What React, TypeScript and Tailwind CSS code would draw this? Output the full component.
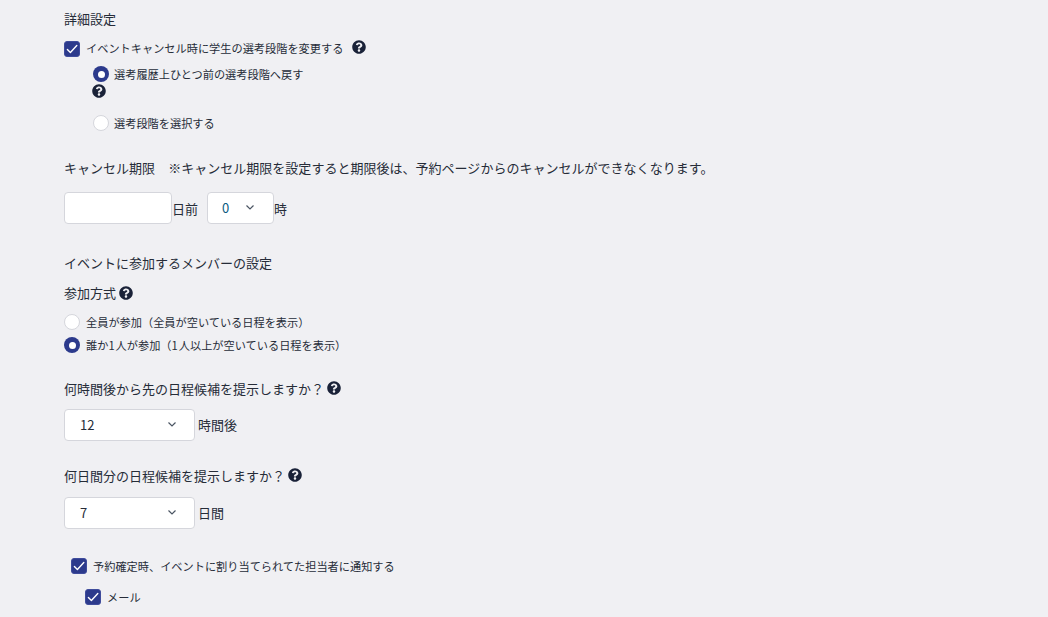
import React from "react";
import { FaQuestionCircle } from "react-icons/fa";

const Help = ({ className = "" }: { className?: string }) => (
  <FaQuestionCircle className={`text-[#1a2238] shrink-0 ${className}`} size={14} />
);

const Check = () => (
  <span className="w-4 h-4 rounded-[3px] bg-[#2c3a8c] border border-[#3f4c9c] flex items-center justify-center shrink-0">
    <svg width="12" height="12" viewBox="0 0 12 12" fill="none">
      <path d="M1.4 6.4 L4.4 9.4 L10.8 2.6" stroke="white" strokeWidth="1.4" strokeLinecap="round" strokeLinejoin="round" />
    </svg>
  </span>
);

const Radio = ({ on }: { on?: boolean }) =>
  on ? (
    <span className="w-4 h-4 rounded-full bg-[#2c3a8c] flex items-center justify-center shrink-0">
      <span className="w-[7px] h-[7px] rounded-full bg-white" />
    </span>
  ) : (
    <span className="w-4 h-4 rounded-full bg-white border border-[#d5d6dc] shrink-0" />
  );

const Chevron = () => (
  <svg width="8" height="5" viewBox="0 0 8 5" fill="none">
    <path d="M0.5 0.5 L4 4 L7.5 0.5" stroke="#4b5563" strokeWidth="1.2" />
  </svg>
);

const Select = ({ value, w, chev, pl, blue }: { value: string; w: string; chev: string; pl: string; blue?: boolean }) => (
  <div className={`h-8 bg-white border border-[#d5d6dc] rounded flex items-center relative shrink-0 ${w}`}>
    <span className={`text-[13px] ${pl} ${blue ? "text-[#0b5a80]" : "text-[#262c38]"}`}>{value}</span>
    <span className={`absolute top-[12px] ${chev}`}><Chevron /></span>
  </div>
);

export default function App() {
  return (
    <div
      lang="ja"
      className="w-[1048px] h-[617px] overflow-hidden bg-[#f0f0f3] pl-16 text-[#262c38] text-[13px]"
      style={{ fontFamily: '"Noto Sans CJK JP", "Noto Sans", sans-serif' }}
    >
      <div className="pt-[9px] h-[19px] box-content leading-[19px]">詳細設定</div>

      <div className="mt-[13px] flex items-center h-4 text-[11.2px]">
        <Check />
        <span className="ml-[6px] -mt-[2px]">イベントキャンセル時に学生の選考段階を変更する</span>
        <Help className="ml-[9px] -mt-[4px]" />
      </div>

      <div className="mt-[9px] ml-[29px] flex items-center h-4 text-[11.2px]">
        <Radio on />
        <span className="ml-[5px]">選考履歴上ひとつ前の選考段階へ戻す</span>
      </div>
      <div className="ml-[28px] mt-[2px] h-[14px]">
        <Help />
      </div>
      <div className="mt-[17px] ml-[29px] flex items-center h-4 text-[11.2px]">
        <Radio />
        <span className="ml-[5px]">選考段階を選択する</span>
      </div>

      <div className="mt-[27px] h-[19px] leading-[19px] whitespace-pre tracking-[0.02px]">キャンセル期限　※キャンセル期限を設定すると期限後は、予約ページからのキャンセルができなくなります。</div>

      <div className="mt-[15px] flex items-center">
        <div className="w-[108px] h-8 bg-white border border-[#d5d6dc] rounded" />
        <span className="w-[35px] pt-[2px]">日前</span>
        <Select value="0" w="w-[67px]" chev="left-[38px]" pl="pl-[14px]" blue />
        <span className="pt-[2px]">時</span>
      </div>

      <div className="mt-[29px] h-[19px] leading-[19px]">イベントに参加するメンバーの設定</div>

      <div className="mt-[11px] h-[19px] leading-[19px] flex items-center">
        参加方式<Help className="ml-[3px]" />
      </div>

      <div className="mt-[12px] flex items-center h-4 text-[11.2px]">
        <Radio />
        <span className="ml-[6px]">全員が参加（全員が空いている日程を表示）</span>
      </div>
      <div className="mt-[7px] flex items-center h-4 text-[11.2px]">
        <Radio on />
        <span className="ml-[6px]">
          誰か<span className="tracking-[1px]">1</span>人が参加（<span className="tracking-[1px]">1</span>人以上が空いている日程を表示）
        </span>
      </div>

      <div className="mt-[26px] h-[19px] leading-[19px] flex items-center">
        何時間後から先の日程候補を提示しますか？<Help className="ml-[3px] -mt-[1px]" />
      </div>
      <div className="mt-[11px] flex items-center">
        <Select value="12" w="w-[131px]" chev="left-[103px]" pl="pl-[15px]" />
        <span className="ml-[3px]">時間後</span>
      </div>

      <div className="mt-[25px] h-[19px] leading-[19px] flex items-center">
        何日間分の日程候補を提示しますか？<Help className="ml-[3px] -mt-[1px]" />
      </div>
      <div className="mt-[12px] flex items-center">
        <Select value="7" w="w-[131px]" chev="left-[103px]" pl="pl-[15px]" />
        <span className="ml-[3px]">日間</span>
      </div>

      <div className="mt-[29px] ml-[7px] flex items-center h-4 text-[11.2px]">
        <Check />
        <span className="ml-[6px]">予約確定時、イベントに割り当てられてた担当者に通知する</span>
      </div>
      <div className="mt-[15px] ml-[21px] flex items-center h-4 text-[11.2px]">
        <Check />
        <span className="ml-[6px]">メール</span>
      </div>
    </div>
  );
}
